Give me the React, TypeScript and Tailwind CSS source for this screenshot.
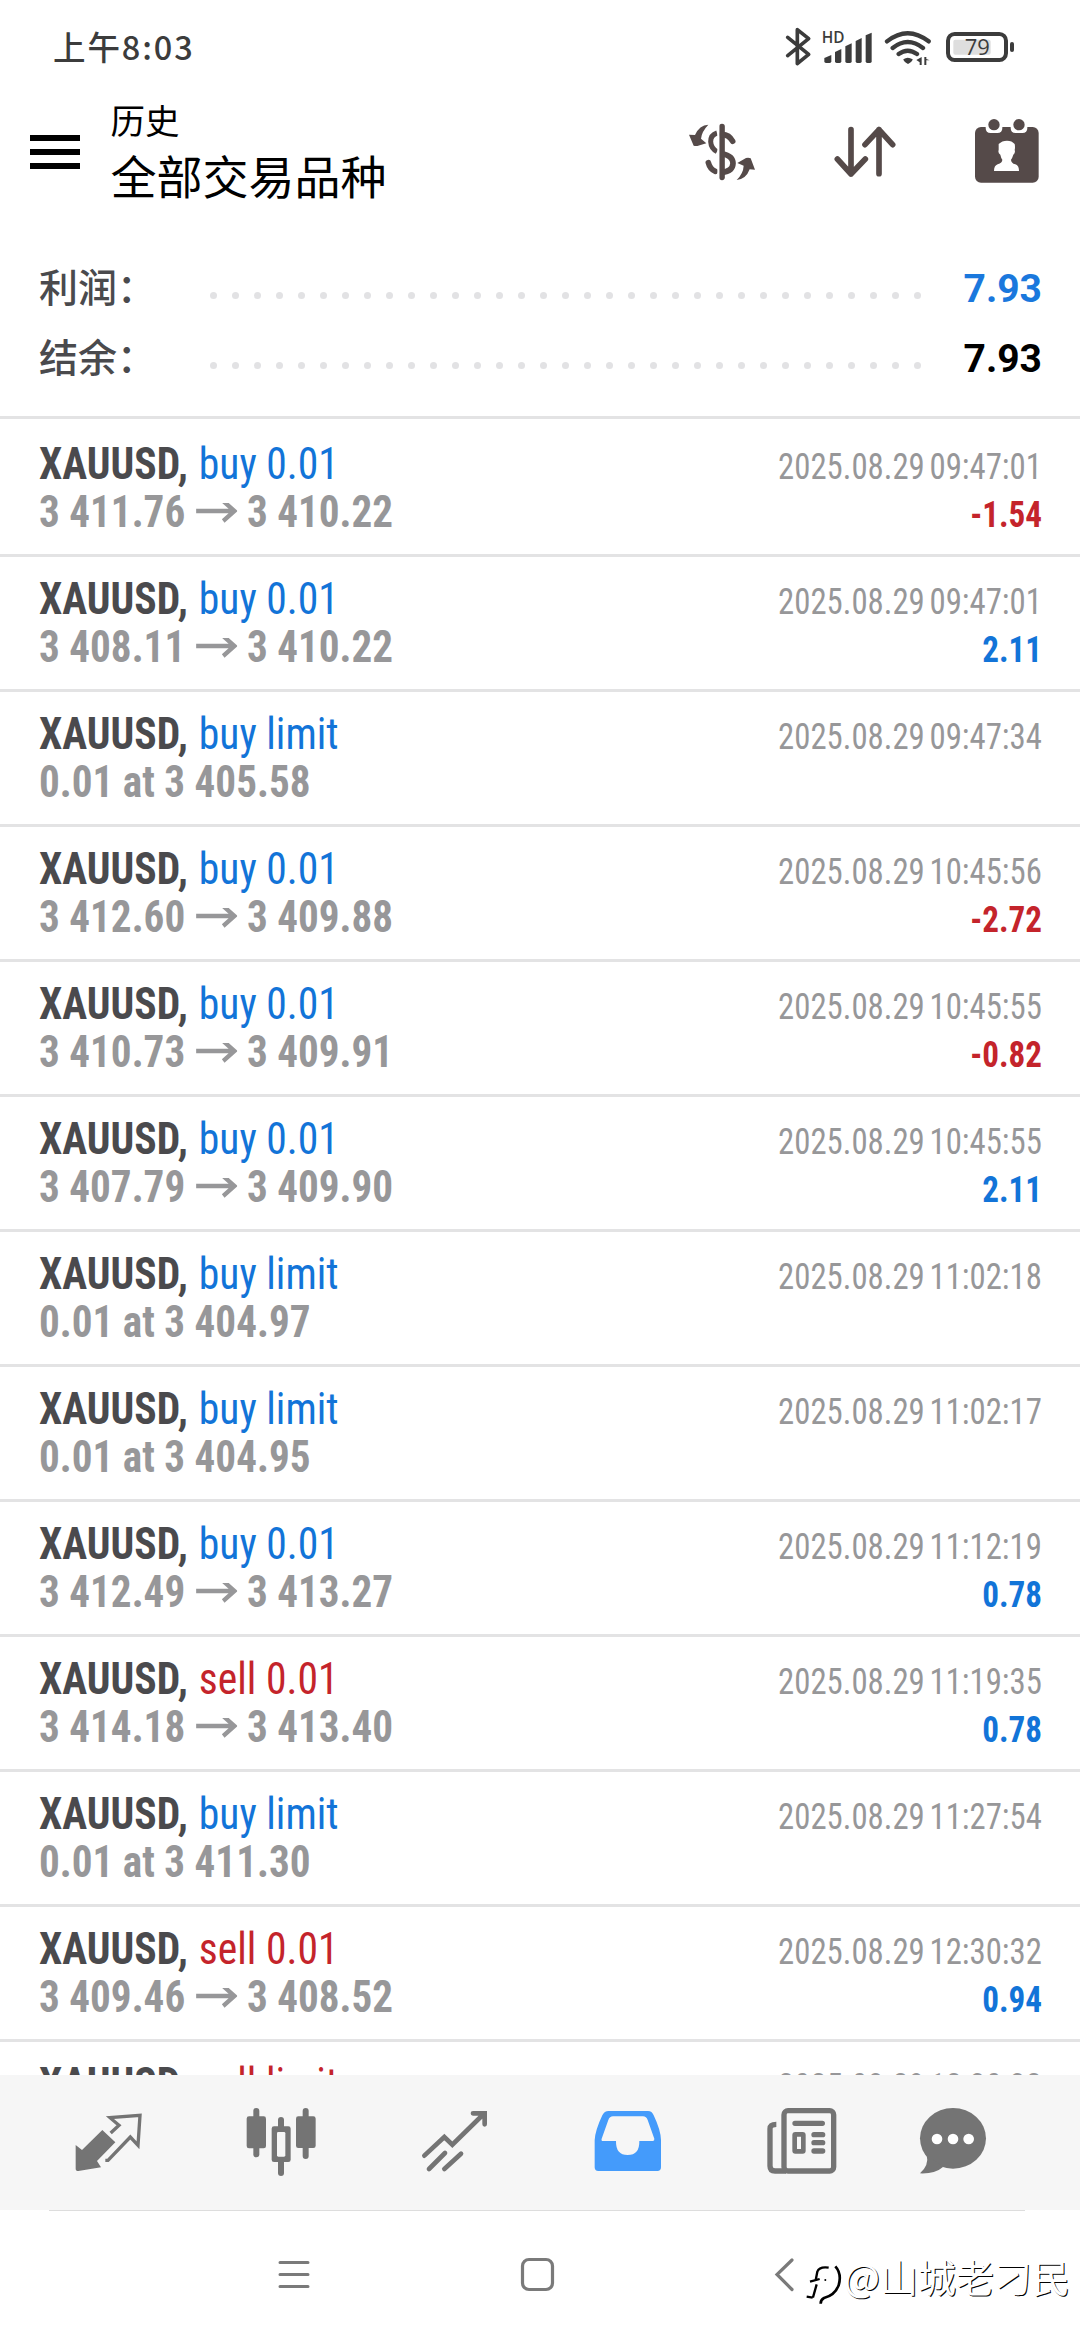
type Trade = {
  side: 'buy' | 'sell';
  size: string;
  detail: string;
  to?: string;
  time: string;
  profit?: string;
};

const trades: Trade[] = [
  { side: 'buy', size: '0.01', detail: '3 411.76', to: '3 410.22', time: '2025.08.29 09:47:01', profit: '-1.54' },
  { side: 'buy', size: '0.01', detail: '3 408.11', to: '3 410.22', time: '2025.08.29 09:47:01', profit: '2.11' },
  { side: 'buy', size: 'limit', detail: '0.01 at 3 405.58', time: '2025.08.29 09:47:34' },
  { side: 'buy', size: '0.01', detail: '3 412.60', to: '3 409.88', time: '2025.08.29 10:45:56', profit: '-2.72' },
  { side: 'buy', size: '0.01', detail: '3 410.73', to: '3 409.91', time: '2025.08.29 10:45:55', profit: '-0.82' },
  { side: 'buy', size: '0.01', detail: '3 407.79', to: '3 409.90', time: '2025.08.29 10:45:55', profit: '2.11' },
  { side: 'buy', size: 'limit', detail: '0.01 at 3 404.97', time: '2025.08.29 11:02:18' },
  { side: 'buy', size: 'limit', detail: '0.01 at 3 404.95', time: '2025.08.29 11:02:17' },
  { side: 'buy', size: '0.01', detail: '3 412.49', to: '3 413.27', time: '2025.08.29 11:12:19', profit: '0.78' },
  { side: 'sell', size: '0.01', detail: '3 414.18', to: '3 413.40', time: '2025.08.29 11:19:35', profit: '0.78' },
  { side: 'buy', size: 'limit', detail: '0.01 at 3 411.30', time: '2025.08.29 11:27:54' },
  { side: 'sell', size: '0.01', detail: '3 409.46', to: '3 408.52', time: '2025.08.29 12:30:32', profit: '0.94' },
  { side: 'sell', size: 'limit', detail: '0.01 at 3 409.46', time: '2025.08.29 12:30:32' },
];

const dots = Array.from({ length: 33 }, (_, i) => i);

function StatusBar() {
  return (
    <div className="flex h-24 shrink-0 items-start justify-between pl-[53px] pr-[64px] text-[#3c3c3c]">
      <div className="pt-[22px] font-['Noto_Sans_CJK_SC',sans-serif] text-[32.5px] font-medium leading-[48px] tracking-[1.9px]">上午8:03</div>
      <svg className="mt-6 h-12 w-[232px]" viewBox="432 72 696 144" fill="none" stroke="currentColor" strokeLinecap="round" strokeLinejoin="round">
        <path d="M443 112 L506 163 L472 191 V89 L506 116 L443 167" strokeWidth="11" />
        <text x="545" y="129" fontFamily="Open Sans, sans-serif" fontSize="46" fontWeight="600" fill="currentColor" stroke="none">HD</text>
        <g fill="currentColor" stroke="none">
          <path d="M553 184 V174 L574 165 V184 Q574 189 569 189 H558 Q553 189 553 184Z" />
          <path d="M585 184 V156 L604 147 V184 Q604 189 599 189 H590 Q585 189 585 184Z" />
          <path d="M616 184 V139 L635 130 V184 Q635 189 630 189 H621 Q616 189 616 184Z" />
          <path d="M647 184 V123 L665 114 V184 Q665 189 660 189 H652 Q647 189 647 184Z" />
          <path d="M677 184 V106 L695 98 V184 Q695 189 690 189 H682 Q677 189 677 184Z" />
          <path d="M790 178 Q803 168 818 178 Q818 184 804 192 Q790 184 790 178Z" />
          <path d="M845 171 V195 H839 V187 L829 180Z M853 171 H859 V177 L869 181 H859 V195 H853Z" />
        </g>
        <path d="M741 124 Q803 75 866 124 M758 144 Q803 108 849 144 M776 162 Q803 142 831 162" strokeWidth="13" />
        <rect x="940" y="119" width="112" height="45" rx="6" fill="#dedede" stroke="none" />
        <rect x="924" y="102" width="174" height="78" rx="20" strokeWidth="12" />
        <path d="M1116 132 V150" strokeWidth="12" />
        <text x="974" y="166" fontFamily="Open Sans, sans-serif" fontSize="66" fontWeight="500" fill="currentColor" stroke="none">79</text>
      </svg>
    </div>
  );
}

function Header() {
  return (
    <div className="flex h-[144px] shrink-0 items-start pl-[30px] pr-[40px]">
      <div className="mt-[39px] flex w-[50px] flex-col gap-2 text-black">
        <span className="h-[6px] bg-black" />
        <span className="h-[6px] bg-black" />
        <span className="h-[6px] bg-black" />
      </div>
      <div className="-mt-[2px] ml-[30.5px] flex-1 font-['Noto_Sans_CJK_SC',sans-serif] text-black">
        <div className="text-[34.5px] leading-[50px]">历史</div>
        <div className="text-[46px] leading-[60px]">全部交易品种</div>
      </div>
      <div className="mt-5 flex text-[#554a49]">
        <svg className="h-[72px] w-[72px]" viewBox="138 348 216 216" fill="none" stroke="currentColor">
          <path d="M246 380 V532" strokeWidth="17" strokeLinecap="round" />
          <path d="M231 399 Q212 405 212 425 Q213 445 231 455" strokeWidth="15" />
          <path d="M246 403 Q268 404 278 424" strokeWidth="17" strokeLinecap="round" />
          <path d="M246 461 Q279 467 279 490 Q278 514 246 517" strokeWidth="17" />
          <path d="M205 488 Q210 508 226 514" strokeWidth="17" strokeLinecap="round" />
          <path d="M235 370 V540" stroke="white" strokeWidth="6" />
          <path d="M205 374 Q178 375 165 405 L147 404 L161 437 Q166 439 172 438 L199 430 L183 416 Q185 395 205 374Z" fill="currentColor" stroke="none" />
          <path d="M290 540 Q318 538 329 508 L345 509 L332 475 Q326 472 318 474 L292 489 L311 497 Q310 520 290 540Z" fill="currentColor" stroke="none" />
        </svg>
        <svg className="ml-[73px] h-[72px] w-[68px]" viewBox="573 348 204 216" fill="none" stroke="currentColor" strokeWidth="17" strokeLinecap="round" strokeLinejoin="round">
          <path d="M633 389 V522 M592 477 L633 522 L676 477 M717 521 V389 M675 434 L717 389 L758 434" />
        </svg>
        <svg className="ml-[75px] h-[72px] w-[66px]" viewBox="1002 348 198 216" fill="currentColor">
          <rect x="1005" y="381" width="191" height="167" rx="18" />
          <path d="M1037 375 H1087 V384 Q1087 399 1072 399 H1052 Q1037 399 1037 384Z M1112 375 H1162 V384 Q1162 399 1147 399 H1127 Q1112 399 1112 384Z" fill="white" />
          <circle cx="1062" cy="374" r="17" />
          <circle cx="1137" cy="374" r="17" />
          <path d="M1076 432 Q1086 422 1101 422 Q1116 422 1124 432 Q1126 442 1124 450 Q1127 458 1120 464 Q1117 474 1113 479 Q1113 489 1126 493 Q1137 497 1137 513 H1062 Q1062 497 1073 493 Q1087 488 1087 479 Q1083 474 1081 464 Q1073 458 1076 450Z" fill="white" />
        </svg>
      </div>
    </div>
  );
}

function SummaryRow({ label, value, tone }: { label: string; value: string; tone: string }) {
  return (
    <div className="flex h-[70px] items-start pl-[39px] pr-[38px]">
      <div className="-mt-[3px] w-[171px] font-['Noto_Sans_CJK_SC',sans-serif] text-[39px] font-medium leading-[70px] text-[#4a4a4d]">{label}</div>
      <div className="mt-[39px] flex w-[711px] justify-between">
        {dots.map((i) => (
          <span key={i} className="size-[7px] rounded-full bg-[#e2e2e4]" />
        ))}
      </div>
      <div className={`mt-px flex-1 text-right text-[39px] font-bold leading-[70px] ${tone}`}>{value}</div>
    </div>
  );
}

function TradeRow({ trade }: { trade: Trade }) {
  const tone = trade.side === 'buy' ? 'text-[#1274d8]' : 'text-[#c4242b]';
  return (
    <div className="h-[135px] shrink-0 border-t-[3px] border-[#e3e3e4] pl-[39px] pr-[38px] pt-[18px] [font-stretch:75%]">
      <div className="flex h-12 items-baseline justify-between whitespace-nowrap leading-[48px]">
        <div className="origin-left scale-x-[.945] text-[44px]">
          <span className="mr-[1.5px] font-bold text-[#4a4a4d]">XAUUSD,</span>{' '}
          <span className={tone}>
            {trade.side} {trade.size}
          </span>
        </div>
        <div className="origin-right scale-x-[.91] text-[36px] text-[#979799] [word-spacing:-3px]">{trade.time}</div>
      </div>
      <div className="flex items-baseline justify-between whitespace-nowrap font-bold leading-[48px]">
        <div className="flex origin-left scale-x-[.935] items-baseline text-[44px] text-[#979799]">
          <span>{trade.detail}</span>
          {trade.to && (
            <>
              <svg className="ml-3 mr-[10px] h-6 w-11" viewBox="0 0 44 24" fill="none" stroke="currentColor" strokeWidth="4.5">
                <path d="M0 8 H42 M29 -2 L41 8 L29 18" />
              </svg>
              <span>{trade.to}</span>
            </>
          )}
        </div>
        {trade.profit && (
          <div className={`origin-right scale-x-[.92] text-[36px] ${trade.profit.startsWith('-') ? 'text-[#c4242b]' : 'text-[#1274d8]'}`}>
            {trade.profit}
          </div>
        )}
      </div>
    </div>
  );
}

function TabBar() {
  return (
    <div className="flex h-[135px] shrink-0 items-start gap-[97.4px] bg-[#f6f6f6] pl-[70px] pt-[15px] text-[#747474]">
      <svg className="h-[100px] w-[76px]" viewBox="30 0 228 300">
        <path d="M47 165 L66 180 L127 120 L166 157 L111 213 L123 232 L55 243 Q47 243 47 236Z" fill="currentColor" />
        <path d="M152 129 L177 106 L150 83 L240 76 L234 166 L211 141 L144 211 H136" fill="none" stroke="currentColor" strokeWidth="10" />
      </svg>
      <svg className="h-[100px] w-[76px]" viewBox="549 0 228 300" fill="currentColor">
        <rect x="580" y="54" width="18" height="148" rx="9" />
        <rect x="560" y="79" width="58" height="96" rx="7" />
        <rect x="728" y="54" width="18" height="153" rx="9" />
        <rect x="708" y="79" width="59" height="95" rx="7" />
        <rect x="654" y="81" width="18" height="177" rx="9" />
        <rect x="635" y="109" width="57" height="107" rx="7" />
        <rect x="651" y="126" width="25" height="74" rx="4" fill="#f6f6f6" />
      </svg>
      <svg className="h-[100px] w-[76px]" viewBox="1070 0 228 300" fill="none" stroke="currentColor" strokeWidth="14" strokeLinecap="round">
        <path d="M1092 197 L1152 141 L1176 164 L1270 72 M1238 70 H1273 V103 M1106 237 L1154 189 M1152 237 L1202 191" />
      </svg>
      <svg className="h-[100px] w-[76px]" viewBox="29 0 228 300">
        <path
          fill="#449bfb"
          fillRule="evenodd"
          d="M43 150 Q45 120 66 76 Q72 63 85 63 H203 Q215 63 220 76 Q241 120 242 150 V232 Q242 243 231 243 H54 Q43 243 43 232Z M64 146 L84 90 Q88 79 98 79 H188 Q198 79 202 90 L222 146 Q223 153 217 153 H177 Q178 195 142 195 Q106 195 107 153 H68 Q62 153 64 146Z"
        />
      </svg>
      <svg className="h-[100px] w-[76px]" viewBox="550 0 228 300" fill="none" stroke="currentColor" strokeWidth="16">
        <rect x="610" y="62" width="149" height="181" rx="12" />
        <path d="M587 103 Q568 103 568 116 V228 Q568 243 583 243 H616" />
        <path d="M643 100 H725 M700 134 H726 M700 158 H726 M700 183 H726" strokeLinecap="round" />
        <rect x="642" y="133" width="26" height="51" rx="2" strokeWidth="14" />
      </svg>
      <svg className="-ml-[21.5px] h-[100px] w-[76px]" viewBox="1005 0 228 300" fill="currentColor">
        <ellipse cx="1119" cy="145" rx="99" ry="91" />
        <path d="M1040 195 Q1048 225 1020 250 Q1065 252 1090 230Z" />
        <g fill="#ffffff">
          <circle cx="1071" cy="147" r="16" />
          <circle cx="1119" cy="147" r="16" />
          <circle cx="1166" cy="147" r="16" />
        </g>
      </svg>
    </div>
  );
}

function SystemNav() {
  return (
    <div className="relative flex h-[130px] shrink-0 items-start px-[49px] text-[#7a7a7a]">
      <div className="absolute left-[49px] top-0 h-px w-[976px] bg-[#dddddd]" />
      <svg className="ml-[229px] mt-[46px] h-9 w-8" viewBox="0 0 32 36" stroke="currentColor" strokeWidth="3" strokeLinecap="round">
        <path d="M2 6.5 H30 M2 18.5 H30 M2 30.5 H30" />
      </svg>
      <svg className="ml-[210px] mt-[46px] h-9 w-9" viewBox="0 0 36 36" fill="none" stroke="currentColor" strokeWidth="3.2">
        <rect x="2.5" y="3.5" width="30" height="30" rx="6.5" />
      </svg>
      <svg className="ml-[217px] mt-[46px] h-9 w-6" viewBox="0 0 24 36" fill="none" stroke="currentColor" strokeWidth="3.2" strokeLinecap="round">
        <path d="M19 4 L4 18.5 L19 33.5" />
      </svg>
      <div className="absolute right-[10px] top-[44px] flex items-start">
        <svg className="mt-[11px] h-[42px] w-[38px]" viewBox="136 74 114 126" fill="none" stroke="black" strokeWidth="7">
          <path d="M204 82 Q176 78 170 94 L165 120 M148 124 L177 116 M168 132 L157 171 M138 169 L156 172" />
          <path d="M224 78 Q244 100 234 135 Q222 165 190 173 Q180 178 180 190" strokeWidth="8" />
          <circle cx="194" cy="119" r="3" fill="black" stroke="none" />
        </svg>
        <div className="whitespace-nowrap font-['Noto_Sans_CJK_SC',sans-serif] text-[38px] leading-[44px] text-white [text-shadow:1px_1px_0_#000]">@山城老刁民</div>
      </div>
    </div>
  );
}

export default function App() {
  return (
    <div className="flex h-[2340px] w-[1080px] flex-col overflow-hidden bg-white font-[Roboto,sans-serif]">
      <StatusBar />
      <Header />
      <div className="h-[176px] shrink-0 pt-[13px]">
        <SummaryRow label="利润：" value="7.93" tone="text-[#1a78dd]" />
        <SummaryRow label="结余：" value="7.93" tone="text-black" />
      </div>
      <div className="flex min-h-0 flex-1 flex-col overflow-hidden">
        <div className="h-[3px] shrink-0 bg-[#e3e3e4]" />
        <div className="flex flex-col [&>*:first-child]:border-white">
          {trades.map((trade, i) => (
            <TradeRow key={i} trade={trade} />
          ))}
        </div>
      </div>
      <TabBar />
      <SystemNav />
    </div>
  );
}
